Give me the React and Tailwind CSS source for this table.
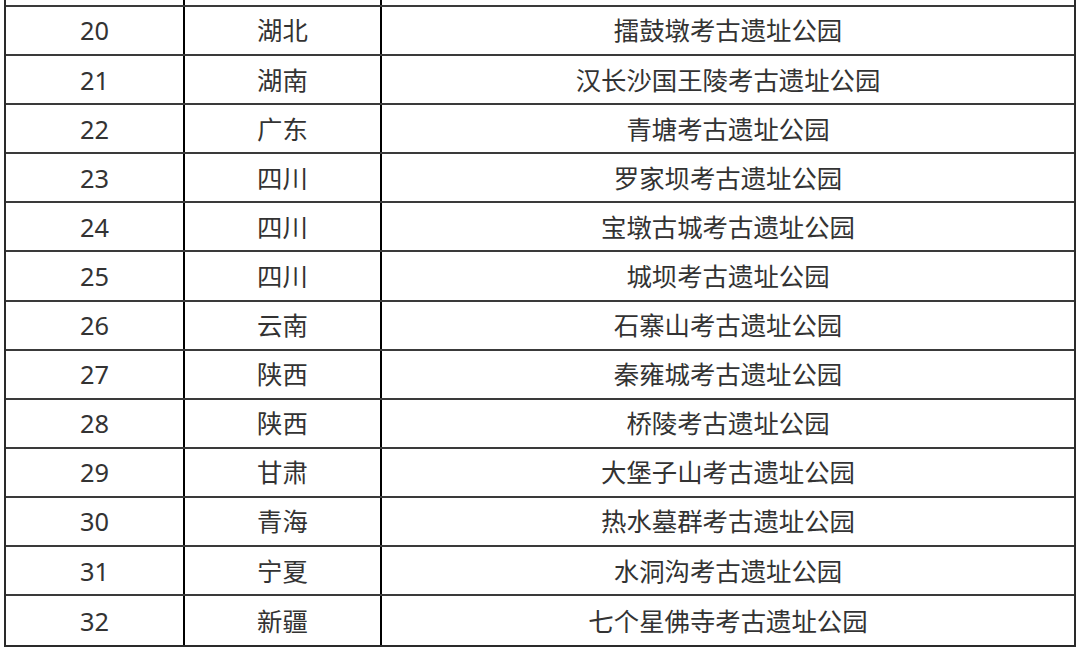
import React from 'react';

const rows = [
  ['20', '湖北', '擂鼓墩考古遗址公园'],
  ['21', '湖南', '汉长沙国王陵考古遗址公园'],
  ['22', '广东', '青塘考古遗址公园'],
  ['23', '四川', '罗家坝考古遗址公园'],
  ['24', '四川', '宝墩古城考古遗址公园'],
  ['25', '四川', '城坝考古遗址公园'],
  ['26', '云南', '石寨山考古遗址公园'],
  ['27', '陕西', '秦雍城考古遗址公园'],
  ['28', '陕西', '桥陵考古遗址公园'],
  ['29', '甘肃', '大堡子山考古遗址公园'],
  ['30', '青海', '热水墓群考古遗址公园'],
  ['31', '宁夏', '水洞沟考古遗址公园'],
  ['32', '新疆', '七个星佛寺考古遗址公园'],
];

export default function App() {
  return (
    <div className="w-[1080px] h-[660px] bg-white overflow-hidden pl-[4px]"
      style={{ fontFamily: '"Noto Sans", "Noto Sans CJK SC", sans-serif' }}>
      <div className="w-[1072px] border-l-2 border-r-2 border-b-2 border-[#2a2a2a]">
        {/* tail of the previous row, cut off at the top */}
        <div className="grid grid-cols-[179px_197px_1fr] h-[7px] border-b-2 border-[#3a3a3a]">
          <div className="border-r-2 border-black" />
          <div className="border-r-2 border-black" />
          <div />
        </div>
        {rows.map((r, i) => (
          <div key={r[0]}
            className={`grid grid-cols-[179px_197px_1fr] h-[49.1px] text-[25.4px] text-[#333] ${i < rows.length - 1 ? 'border-b-2 border-[#3a3a3a]' : ''}`}>
            <div className="border-r-2 border-black flex items-center justify-center">{r[0]}</div>
            <div className="border-r-2 border-black flex items-center justify-center">{r[1]}</div>
            <div className="flex items-center justify-center">{r[2]}</div>
          </div>
        ))}
      </div>
    </div>
  );
}
